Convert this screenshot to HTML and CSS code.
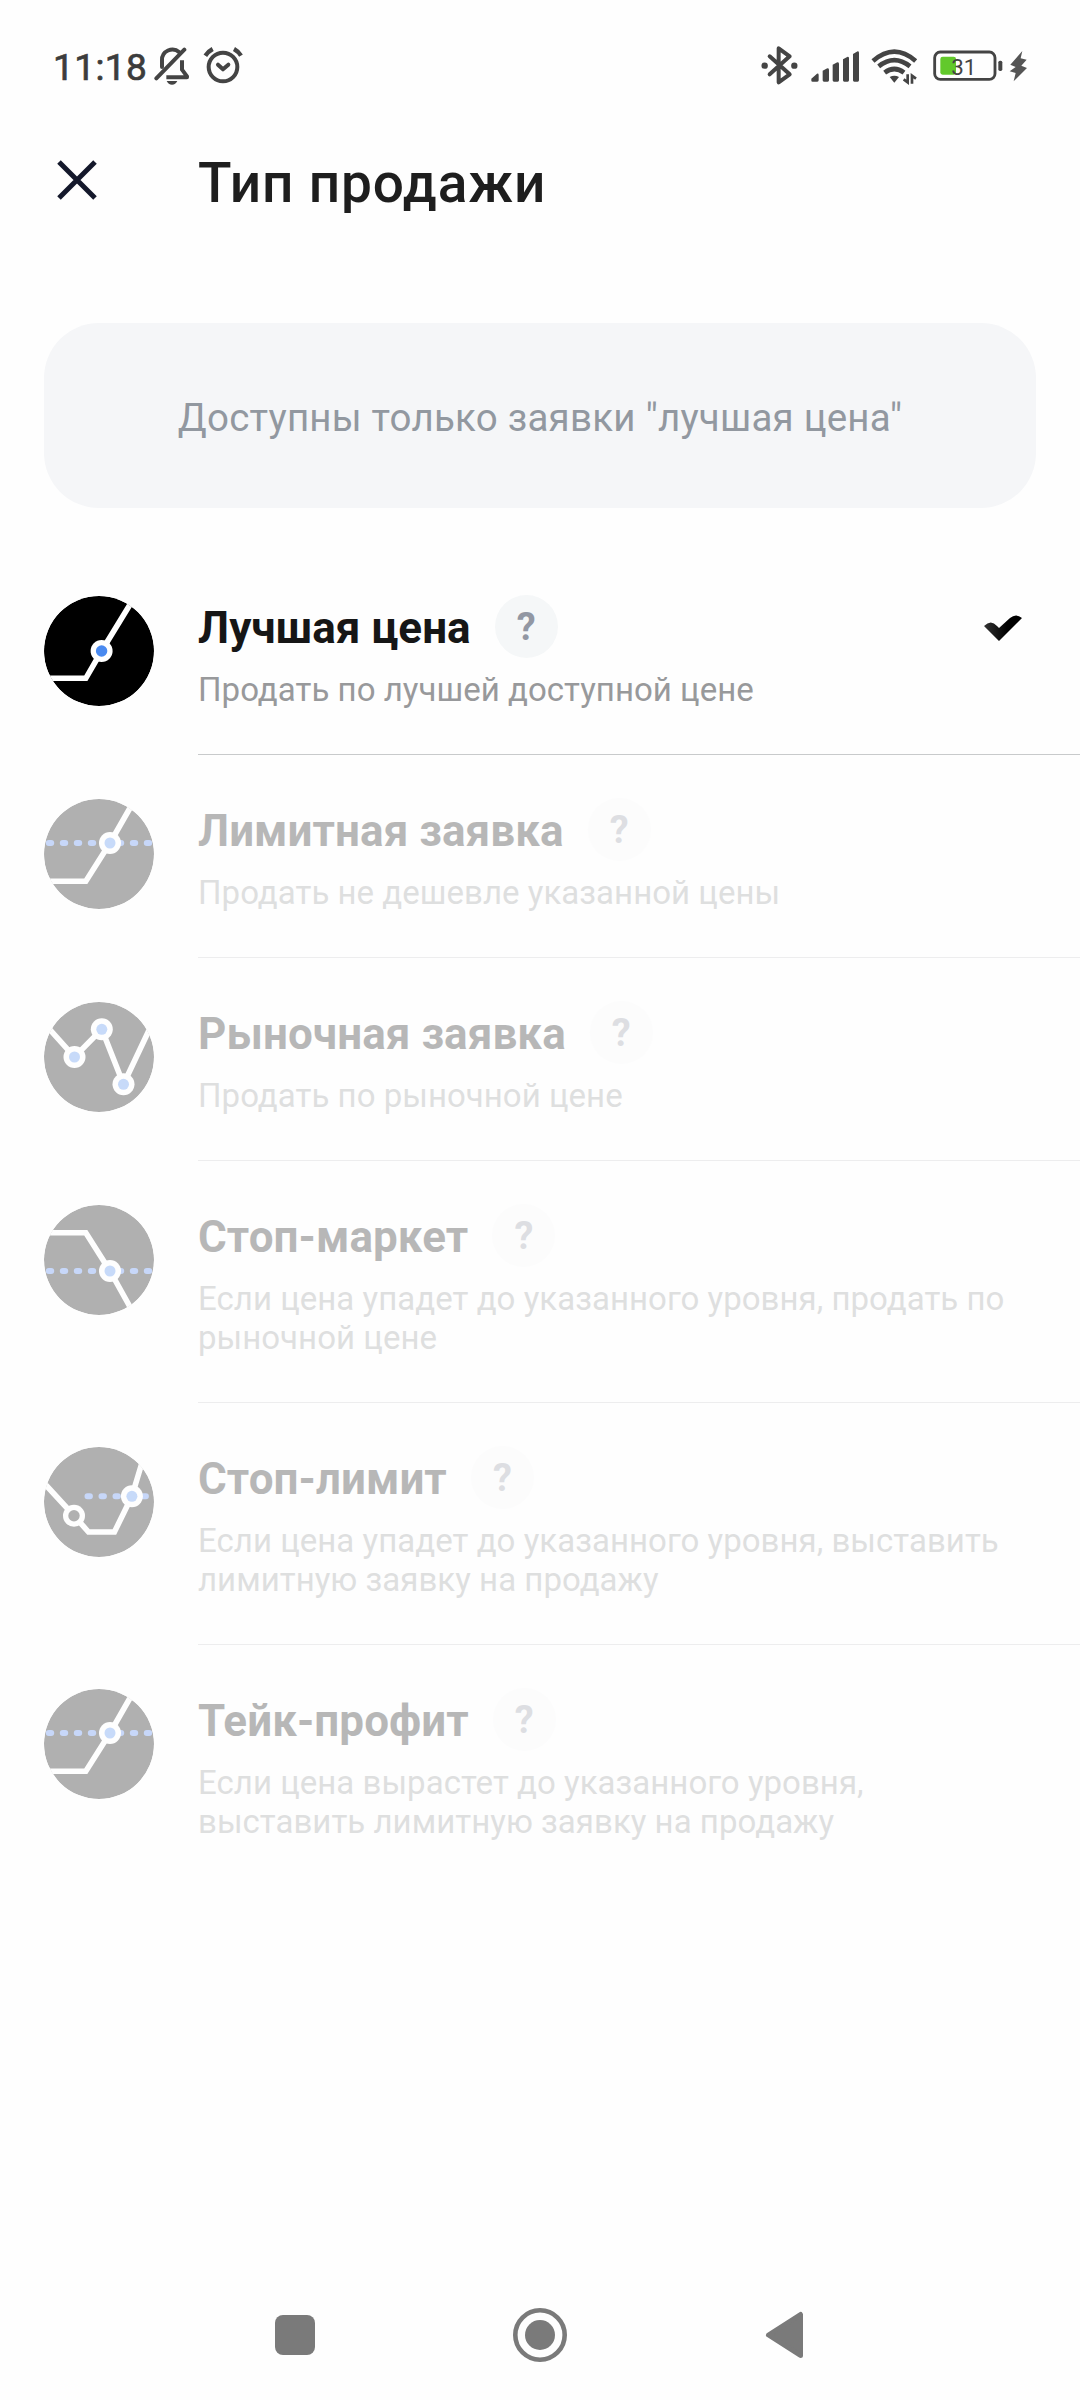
FILE: index.html
```html
<!DOCTYPE html>
<html lang="ru">
<head>
<meta charset="utf-8">
<title>Тип продажи</title>
<link rel="stylesheet" href="styles.css">
</head>
<body>
<div class="screen">
  <div class="status">
    <div class="status-group">
      <span class="clock">11:18</span>
      <svg class="bell" width="36" height="43.33" viewBox="373 40 108 130" fill="none" stroke="#444" stroke-width="12" stroke-linecap="round" stroke-linejoin="round">
        <path d="M397 112V92a31 31 0 0 1 52-24"/><path d="M464 60L380 146"/>
        <path d="M457 92V120L472 140V143H410" stroke-linecap="butt"/>
        <path d="M411 154H443Q438 165 427 165T411 154Z" fill="#444" stroke="none"/>
      </svg>
      <svg width="40.67" height="43.33" viewBox="520 40 122 130" fill="none" stroke="#444" stroke-width="12" stroke-linecap="round" stroke-linejoin="round">
        <circle cx="580" cy="112" r="43"/><path d="M565 105L580 119L596 105"/><path d="M527 78Q536 65 549 58M613 58Q626 65 634 78" stroke-linecap="butt" stroke-width="13"/>
      </svg>
    </div>
    <div class="status-group status-right">
      <svg width="37.33" height="43.33" viewBox="64 40 112 130" fill="none" stroke="#444" stroke-width="12" stroke-linecap="round" stroke-linejoin="round">
        <path d="M90 80L150 134L117 158V56L150 80L90 134"/><circle cx="75" cy="108" r="9.500" fill="#444" stroke="none"/><circle cx="164" cy="108" r="9.500" fill="#444" stroke="none"/>
      </svg>
      <svg width="48.67" height="43.33" viewBox="212 40 146 130" fill="#444">
        <path d="M213 153V147L230 132Q235 131 235 136V152Q235 156 231 156H217Q213 156 213 153ZM247 123L261 116Q266 116 266 120V152Q266 156 262 156H251Q247 156 247 152ZM277 105L291 98Q296 98 296 102V152Q296 156 292 156H281Q277 156 277 152ZM308 89L322 81Q326 81 326 85V152Q326 156 322 156H312Q308 156 308 152ZM338 73L352 65Q356 65 356 69V152Q356 156 352 156H342Q338 156 338 152Z"/>
      </svg>
      <svg width="47.33" height="43.33" viewBox="394 40 142 130" fill="none" stroke="#444" stroke-width="14">
        <path d="M400 94Q464 38 528 94"/><path d="M417 110Q464 73 511 110"/><path d="M435 129Q464 107 493 129"/>
        <path d="M450 142Q464 134 478 142L464 159Z" fill="#444" stroke="none"/>
        <path d="M504 134V158L492 149M517 162V138L529 147" stroke-width="8"/>
      </svg>
      <svg width="96.67" height="43.33" viewBox="572 40 290 130">
        <rect x="583" y="67" width="181" height="82" rx="17" fill="none" stroke="#444" stroke-width="8.500"/>
        <rect x="600" y="81" width="47" height="54" rx="7" fill="#62c92b"/>
        <rect x="774" y="93" width="12" height="31" rx="5" fill="#444"/>
        <text class="charge" x="633" y="135">31</text>
        <path d="M846 64L810 105L826 112L808 125L826 130L820 155L860 115L843 108L859 90L841 86Z" fill="#555"/>
      </svg>
    </div>
  </div>

  <header class="header">
    <svg width="40" height="40" viewBox="0 0 40 40" stroke="#14182b" stroke-width="5"><path d="M2 2L38 38M38 2L2 38"/></svg>
    <h1>Тип продажи</h1>
  </header>

  <div class="notice">Доступны только заявки "лучшая цена"</div>

  <main class="list">
    <section class="row selected">
      <svg class="chart" viewBox="0 0 110 110">
        <circle cx="55" cy="55" r="55"/>
        <path class="line" d="M0 82.3H41.8L57.6 55L90 2"/>
        <circle class="ring" cx="57.6" cy="55" r="11"/><circle class="dot" cx="57.6" cy="55" r="5.7"/>
      </svg>
      <div class="body">
        <div class="name"><h2>Лучшая цена</h2><span class="help">?</span>
          <svg class="check" width="38" height="27" viewBox="0 0 38 27"><defs><linearGradient id="ink"><stop offset="0" stop-color="#333"/><stop offset=".6" stop-color="#000"/></linearGradient></defs><path d="M0 11Q7 4 13 11L15 13L26 3Q32-2 38 3L15 26Z" fill="url(#ink)"/></svg>
        </div>
        <p>Продать по лучшей доступной цене</p>
      </div>
    </section>
    <section class="row disabled">
      <svg class="chart" viewBox="0 0 110 110">
        <circle cx="55" cy="55" r="55"/>
        <path class="dashes" d="M4.8 44H108"/>
        <path class="line" d="M0 82.3H41.8L66 44L90 2"/>
        <circle class="ring" cx="66" cy="44" r="11"/><circle class="dot" cx="66" cy="44" r="5.5"/>
      </svg>
      <div class="body">
        <div class="name"><h2>Лимитная заявка</h2><span class="help">?</span></div>
        <p>Продать не дешевле указанной цены</p>
      </div>
    </section>
    <section class="row disabled">
      <svg class="chart" viewBox="0 0 110 110">
        <circle cx="55" cy="55" r="55"/>
        <path class="line" d="M0 21L30.5 55L57.8 27.3L79.5 82.3L107 24"/>
        <circle class="ring" cx="30.5" cy="55" r="11"/><circle class="dot" cx="30.5" cy="55" r="5.5"/>
        <circle class="ring" cx="57.8" cy="27.3" r="11"/><circle class="dot" cx="57.8" cy="27.3" r="5.5"/>
        <circle class="ring" cx="79.5" cy="82.3" r="11"/><circle class="dot" cx="79.5" cy="82.3" r="5.5"/>
      </svg>
      <div class="body">
        <div class="name"><h2>Рыночная заявка</h2><span class="help">?</span></div>
        <p>Продать по рыночной цене</p>
      </div>
    </section>
    <section class="row disabled">
      <svg class="chart" viewBox="0 0 110 110">
        <circle cx="55" cy="55" r="55"/>
        <path class="dashes" d="M4.8 66H108"/>
        <path class="line" d="M0 27.7H41.8L66 66L90 109"/>
        <circle class="ring" cx="66" cy="66" r="11"/><circle class="dot" cx="66" cy="66" r="5.5"/>
      </svg>
      <div class="body">
        <div class="name"><h2>Стоп-маркет</h2><span class="help">?</span></div>
        <p>Если цена упадет до указанного уровня, продать по<br>рыночной цене</p>
      </div>
    </section>
    <section class="row disabled">
      <svg class="chart" viewBox="0 0 110 110">
        <circle cx="55" cy="55" r="55"/>
        <path class="dashes" d="M43.5 49.3H108"/>
        <path class="line" d="M0 36L30 68.7L44.5 85H70.4L87.9 49.3L100 9"/>
        <circle class="ring" cx="30" cy="68.7" r="11"/><circle cx="30" cy="68.7" r="5.7"/>
        <circle class="ring" cx="87.9" cy="49.3" r="11"/><circle class="dot" cx="87.9" cy="49.3" r="5.5"/>
      </svg>
      <div class="body">
        <div class="name"><h2>Стоп-лимит</h2><span class="help">?</span></div>
        <p>Если цена упадет до указанного уровня, выставить<br>лимитную заявку на продажу</p>
      </div>
    </section>
    <section class="row disabled">
      <svg class="chart" viewBox="0 0 110 110">
        <circle cx="55" cy="55" r="55"/>
        <path class="dashes" d="M4.8 44H108"/>
        <path class="line" d="M0 82.3H41.8L66 44L90 2"/>
        <circle class="ring" cx="66" cy="44" r="11"/><circle class="dot" cx="66" cy="44" r="5.5"/>
      </svg>
      <div class="body">
        <div class="name"><h2>Тейк-профит</h2><span class="help">?</span></div>
        <p>Если цена вырастет до указанного уровня,<br>выставить лимитную заявку на продажу</p>
      </div>
    </section>
  </main>

  <nav class="navbar">
    <svg width="54" height="54" viewBox="0 0 54 54" fill="#7a7a7a"><rect x="7" y="7" width="40" height="40" rx="8"/></svg>
    <svg width="54" height="54" viewBox="0 0 54 54" fill="#7a7a7a"><circle cx="27" cy="27" r="24.7" fill="none" stroke="#7a7a7a" stroke-width="4.6"/><circle cx="27" cy="27" r="15"/></svg>
    <svg width="54" height="54" viewBox="0 0 54 54" fill="#7a7a7a" stroke="#7a7a7a" stroke-width="5" stroke-linejoin="round"><path d="M10.500 27L42.500 6.500V47.500Z"/></svg>
  </nav>
</div>
</body>
</html>
```
FILE: styles.css
```css
* { box-sizing: border-box; }
body { margin: 0; background: #fefefe; font-family: Roboto, "Noto Sans", sans-serif; }
h1, h2, p { margin: 0; font-weight: normal; }
svg { display: block; flex: none; }
.screen { width: 1080px; height: 2400px; display: flex; flex-direction: column; }

.status { height: 130px; padding: 43.33px 52.67px 0 53px; display: flex; justify-content: space-between; align-items: flex-start; }
.status-group { display: flex; }
.status-right { gap: 12px; }
.clock { width: 101px; font-size: 37px; line-height: 50px; font-weight: 400; letter-spacing: .4px; color: #3c3c3c; -webkit-text-stroke: .7px #3c3c3c; }
.bell { margin-right: 13px; }
.charge { font-size: 67px; fill: #444; }

.header { height: 193px; padding: 15px 57px 0; display: flex; align-items: flex-start; }
.header svg { margin-top: 15px; }
.header h1 { margin: 1px 0 0 101px; font-size: 55px; line-height: 74px; font-weight: 500; color: #1e1e1e; letter-spacing: .85px; }

.notice { height: 185px; margin: 0 44px 44px; border-radius: 55px; background: #f5f6f8; color: #9298a0; display: flex; align-items: center; justify-content: center; font-size: 38.5px; letter-spacing: .22px; padding-top: 4px; }

.list { flex: 1; }
.row { display: flex; padding-left: 44px; }
.chart { width: 110px; height: 110px; margin: 44px 44px 0 0; border-radius: 50%; }
.line { fill: none; stroke: #fff; stroke-width: 5.6; }
.ring { fill: #fff; }
.dot { fill: #4a8af0; }
.dashes { fill: none; stroke: #4a80ee; stroke-width: 6; stroke-linecap: round; stroke-dasharray: 2.4 11.6; }
.body { flex: 1; padding: 43px 0 45px; border-bottom: 1px solid #c8cacb; }
.row:last-child .body { border-bottom: 0; }
.name { display: flex; align-items: center; height: 63px; }
.name h2 { font-size: 44px; font-weight: 700; color: #161616; padding-top: 2px; letter-spacing: .06px; }
.help { width: 63px; height: 63px; margin-left: 24px; border-radius: 50%; background: #f5f7f8; color: #9297a3; display: flex; align-items: center; justify-content: center; font-size: 38px; font-weight: 700; }
.check { margin: 4px 58px 0 auto; }
.body p { margin-top: 12px; font-size: 33px; line-height: 39px; letter-spacing: .03px; color: #98999b; }
.disabled .chart, .disabled .name, .disabled p { opacity: .3; }
.disabled .body { border-bottom-color: #ededee; }
.disabled .help { background: #f8f9fa; }

.navbar { height: 92px; padding: 0 268px; display: flex; justify-content: space-between; }
```
